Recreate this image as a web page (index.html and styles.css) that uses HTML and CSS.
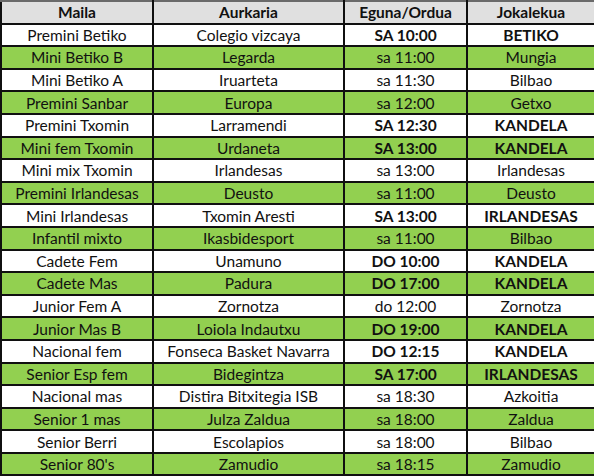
FILE: index.html
```html
<!DOCTYPE html>
<html>
<head>
<meta charset="utf-8">
<link rel="stylesheet" href="styles.css">
</head>
<body>
<table class="schedule">
  <colgroup>
    <col class="c-maila">
    <col class="c-aurkaria">
    <col class="c-eguna">
    <col class="c-jokalekua">
  </colgroup>
  <thead>
    <tr class="head"><th>Maila</th><th>Aurkaria</th><th>Eguna/Ordua</th><th>Jokalekua</th></tr>
  </thead>
  <tbody>
    <tr class="white"><td>Premini Betiko</td><td>Colegio vizcaya</td><td class="b">SA 10:00</td><td class="b">BETIKO</td></tr>
    <tr class="green"><td>Mini Betiko B</td><td>Legarda</td><td>sa 11:00</td><td>Mungia</td></tr>
    <tr class="white"><td>Mini Betiko A</td><td>Iruarteta</td><td>sa 11:30</td><td>Bilbao</td></tr>
    <tr class="green"><td>Premini Sanbar</td><td>Europa</td><td>sa 12:00</td><td>Getxo</td></tr>
    <tr class="white"><td>Premini Txomin</td><td>Larramendi</td><td class="b">SA 12:30</td><td class="b">KANDELA</td></tr>
    <tr class="green"><td>Mini fem Txomin</td><td>Urdaneta</td><td class="b">SA 13:00</td><td class="b">KANDELA</td></tr>
    <tr class="white"><td>Mini mix Txomin</td><td>Irlandesas</td><td>sa 13:00</td><td>Irlandesas</td></tr>
    <tr class="green"><td>Premini Irlandesas</td><td>Deusto</td><td>sa 11:00</td><td>Deusto</td></tr>
    <tr class="white"><td>Mini Irlandesas</td><td>Txomin Aresti</td><td class="b">SA 13:00</td><td class="b">IRLANDESAS</td></tr>
    <tr class="green"><td>Infantil mixto</td><td>Ikasbidesport</td><td>sa 11:00</td><td>Bilbao</td></tr>
    <tr class="white"><td>Cadete Fem</td><td>Unamuno</td><td class="b">DO 10:00</td><td class="b">KANDELA</td></tr>
    <tr class="green"><td>Cadete Mas</td><td>Padura</td><td class="b">DO 17:00</td><td class="b">KANDELA</td></tr>
    <tr class="white"><td>Junior Fem A</td><td>Zornotza</td><td>do 12:00</td><td>Zornotza</td></tr>
    <tr class="green"><td>Junior Mas B</td><td>Loiola Indautxu</td><td class="b">DO 19:00</td><td class="b">KANDELA</td></tr>
    <tr class="white"><td>Nacional fem</td><td>Fonseca Basket Navarra</td><td class="b">DO 12:15</td><td class="b">KANDELA</td></tr>
    <tr class="green"><td>Senior Esp fem</td><td>Bidegintza</td><td class="b">SA 17:00</td><td class="b">IRLANDESAS</td></tr>
    <tr class="white"><td>Nacional mas</td><td>Distira Bitxitegia ISB</td><td>sa 18:30</td><td>Azkoitia</td></tr>
    <tr class="green"><td>Senior 1 mas</td><td>Julza Zaldua</td><td>sa 18:00</td><td>Zaldua</td></tr>
    <tr class="white"><td>Senior Berri</td><td>Escolapios</td><td>sa 18:00</td><td>Bilbao</td></tr>
    <tr class="green"><td>Senior 80's</td><td>Zamudio</td><td>sa 18:15</td><td>Zamudio</td></tr>
  </tbody>
</table>
</body>
</html>
```
FILE: styles.css
```css
html, body {
  margin: 0;
  padding: 0;
  background: #ffffff;
}
.schedule {
  width: 594px;
  height: 475px;
  table-layout: fixed;
  border-collapse: collapse;
  font-family: Lato, "Open Sans", sans-serif;
  font-size: 15.5px;
  color: #111111;
}
.c-maila { width: 152px; }
.c-aurkaria { width: 191px; }
.c-eguna { width: 123px; }
.c-jokalekua { width: 128px; }
.schedule th,
.schedule td {
  border: 2px solid #101010;
  padding: 0;
  text-align: center;
  white-space: nowrap;
  overflow: hidden;
  line-height: 18px;
}
.schedule th {
  font-weight: bold;
  background: #e0e0e0;
}
.schedule thead th {
  border-top: 2px solid #6a6a6a;
}
.schedule tr {
  height: 22.6px;
}
.green td { background: #92d050; }
.white td { background: #ffffff; }
.schedule td.b { font-weight: bold; }
```
